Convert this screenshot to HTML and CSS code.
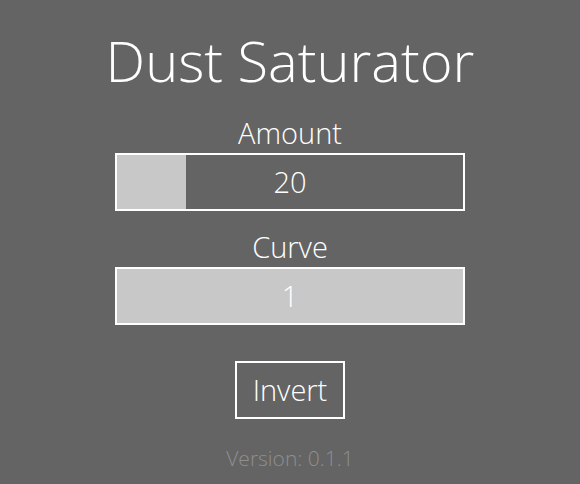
FILE: index.html
```html
<!DOCTYPE html>
<html>
<head>
<meta charset="utf-8">
<link rel="stylesheet" href="styles.css">
</head>
<body>
<div class="app">
  <h1 class="title">Dust Saturator</h1>
  <div class="control">
    <div class="label">Amount</div>
    <div class="slider">
      <div class="fill" style="width: 20%"></div>
      <span class="value">20</span>
    </div>
  </div>
  <div class="control control-second">
    <div class="label">Curve</div>
    <div class="slider">
      <div class="fill" style="width: 100%"></div>
      <span class="value">1</span>
    </div>
  </div>
  <button class="invert">Invert</button>
  <div class="version">Version: 0.1.1</div>
</div>
</body>
</html>
```
FILE: styles.css
```css
html, body {
  margin: 0;
  padding: 0;
  background: #646464;
}
body {
  width: 580px;
  height: 484px;
  overflow: hidden;
  font-family: "Open Sans", "DejaVu Sans", sans-serif;
  color: #ffffff;
}
.app {
  display: flex;
  flex-direction: column;
  align-items: center;
  padding-top: 20px;
}
.title {
  margin: 0;
  font-size: 56px;
  font-weight: 300;
  line-height: 80px;
  letter-spacing: 0;
}
.control {
  display: flex;
  flex-direction: column;
  align-items: center;
  margin-top: 13px;
}
.control-second {
  margin-top: 16px;
}
.label {
  font-size: 29px;
  font-weight: 300;
  line-height: 40px;
}
.slider {
  position: relative;
  box-sizing: border-box;
  width: 350px;
  height: 58px;
  border: 2px solid #ffffff;
  display: flex;
  align-items: center;
  justify-content: center;
}
.fill {
  position: absolute;
  left: 0;
  top: 0;
  bottom: 0;
  background: #c8c8c8;
}
.value {
  position: relative;
  font-size: 29px;
  font-weight: 300;
  line-height: 40px;
}
.invert {
  margin-top: 36px;
  box-sizing: border-box;
  height: 58px;
  padding: 0 16px;
  background: transparent;
  border: 2px solid #ffffff;
  color: #ffffff;
  font-family: inherit;
  font-size: 29px;
  font-weight: 300;
  line-height: 40px;
}
.version {
  margin-top: 24px;
  font-size: 21px;
  font-weight: 300;
  line-height: 30px;
  color: #8e8e8e;
}
```
